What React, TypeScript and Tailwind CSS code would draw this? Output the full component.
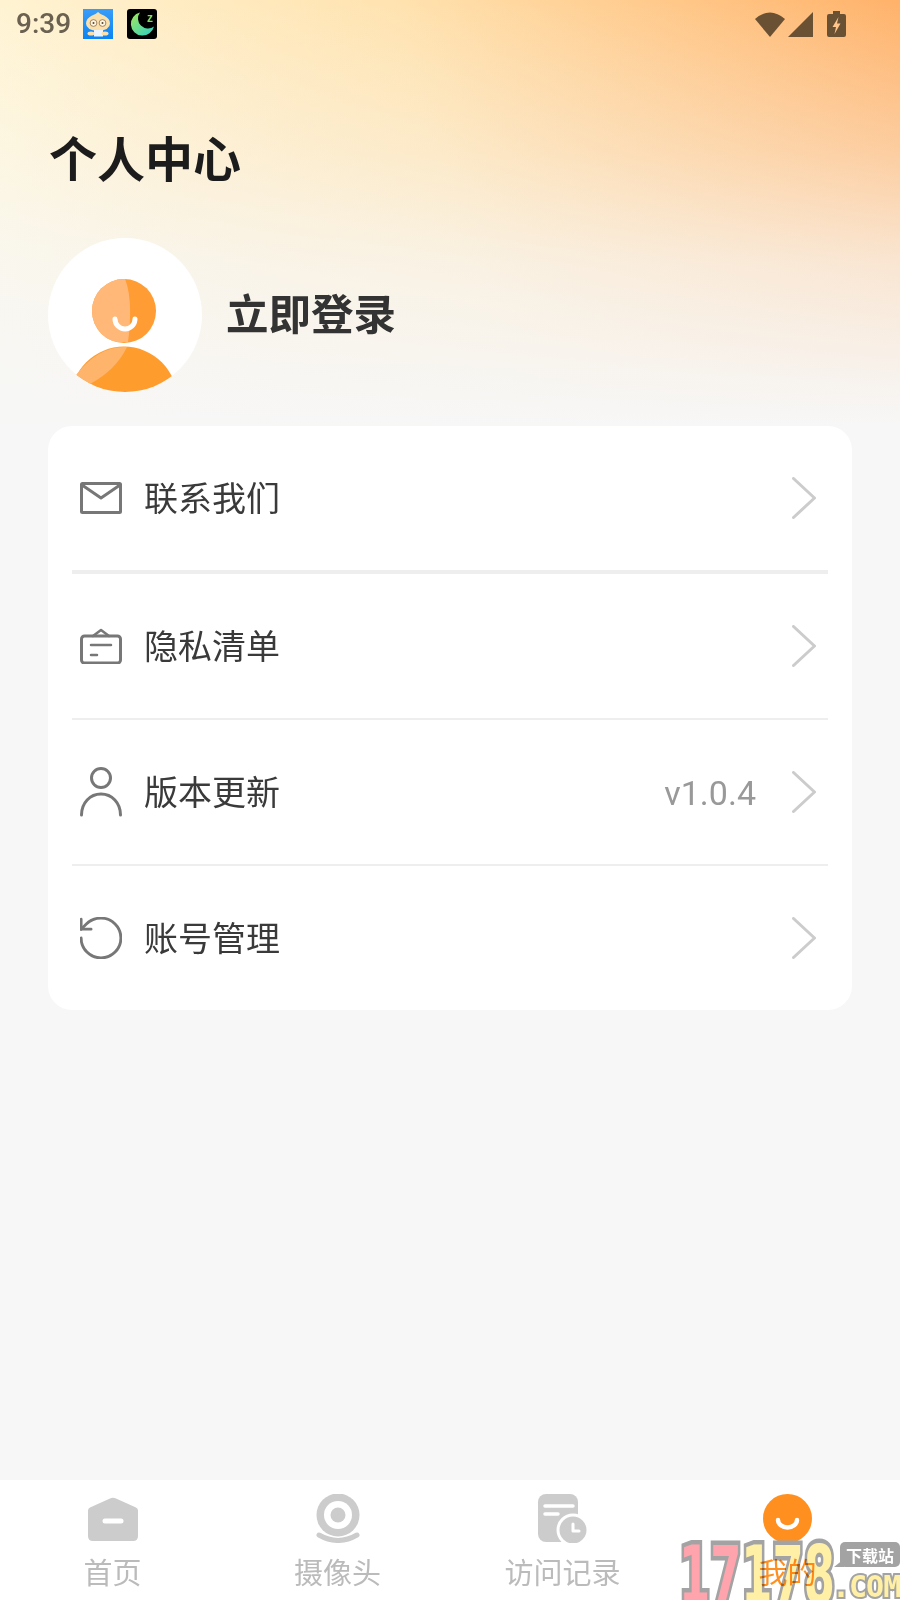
import React from "react";

const rows = [
  { icon: "mail", label: "联系我们" },
  { icon: "list", label: "隐私清单" },
  { icon: "user", label: "版本更新", value: "v1.0.4" },
  { icon: "reset", label: "账号管理" },
];

const tabs = [
  { icon: "home", label: "首页" },
  { icon: "camera", label: "摄像头" },
  { icon: "record", label: "访问记录" },
  { icon: "mine", label: "我的", active: true },
];

function RowIcon({ name }: { name: string }) {
  const common = { fill: "none", stroke: "#777", strokeWidth: 3, strokeLinejoin: "round" as const, strokeLinecap: "round" as const };
  if (name === "mail") {
    return (
      <svg width="42" height="32" viewBox="0 0 42 32" {...common}>
        <rect x="1.5" y="1.5" width="39" height="29" rx="1" />
        <path d="M2 3l19 13L40 3" />
      </svg>
    );
  }
  if (name === "list") {
    return (
      <svg width="42" height="36" viewBox="0 0 42 36" {...common}>
        <path d="M13 8l8-6 8 6" strokeWidth="2.5" />
        <rect x="1.5" y="8" width="39" height="27" rx="3" />
        <path d="M11 17h20M11 27h6" strokeWidth="2.5" />
      </svg>
    );
  }
  if (name === "user") {
    return (
      <svg width="42" height="50" viewBox="0 0 42 50" {...common}>
        <circle cx="21" cy="11" r="9.5" />
        <path d="M1.5 48c0-12 8.5-21 19.5-21s19.500 9 19.500 21" />
      </svg>
    );
  }
  return (
    <svg width="42" height="42" viewBox="2.500 2.500 19 19" fill="none" stroke="#777" strokeWidth="1.300" strokeLinecap="round" strokeLinejoin="round">
      <path d="M3 12a9 9 0 1 0 9-9 9.750 9.750 0 0 0-6.740 2.740L3 8" />
      <path d="M3 3.500V8h4.500" />
    </svg>
  );
}

function TabIcon({ name }: { name: string }) {
  if (name === "home") {
    return (
      <svg width="50" height="44" viewBox="0 0 50 44">
        <path d="M22 1.500q3-1.500 6 0l20 9q2 1 2 3V39q0 5-5 5H5q-5 0-5-5V13.500q0-2 2-3z" fill="#ccc" />
        <path d="M17 24h16" stroke="#fff" strokeWidth="5" strokeLinecap="round" />
      </svg>
    );
  }
  if (name === "camera") {
    return (
      <svg width="44" height="49" viewBox="0 0 44 49">
        <circle cx="22" cy="21" r="21.500" fill="#ccc" />
        <circle cx="22" cy="21" r="14" fill="#fff" />
        <circle cx="22" cy="21" r="7.500" fill="#ccc" />
        <path d="M3 41q19 11 38 0" fill="none" stroke="#ccc" strokeWidth="5" strokeLinecap="round" />
      </svg>
    );
  }
  if (name === "record") {
    return (
      <svg width="50" height="49" viewBox="0 0 50 49">
        <rect x="0" y="0" width="40" height="48" rx="8" fill="#ccc" />
        <path d="M7 12h28M7 20h13" stroke="#fff" strokeWidth="3.500" strokeLinecap="round" />
        <circle cx="35" cy="36" r="15" fill="#ccc" stroke="#fff" strokeWidth="3" />
        <path d="M35 30v7h6" fill="none" stroke="#fff" strokeWidth="3" strokeLinecap="round" strokeLinejoin="round" />
      </svg>
    );
  }
  return (
    <svg width="49" height="49" viewBox="0 0 49 49">
      <circle cx="24.500" cy="24.500" r="24.500" fill="#ff8f1f" />
      <path d="M15 26a9.500 7.500 0 0 0 19 0" fill="none" stroke="#fff" strokeWidth="4.500" strokeLinecap="round" />
    </svg>
  );
}

function Avatar() {
  return (
    <svg width="154" height="154" viewBox="0 0 154 154" className="shrink-0">
      <defs>
        <clipPath id="avatarDisc">
          <circle cx="77" cy="77" r="77" />
        </clipPath>
        <clipPath id="avatarHead">
          <circle cx="76" cy="73" r="32" />
        </clipPath>
      </defs>
      <circle cx="77" cy="77" r="77" fill="#fff" />
      <circle cx="76" cy="73" r="32" fill="#ff9c33" />
      <path d="M30 30H71q16 20 9 74H30z" fill="#ffb878" clipPath="url(#avatarHead)" />
      <g clipPath="url(#avatarDisc)">
        <circle cx="76" cy="162" r="53.400" fill="#ff9c2e" />
        <path d="M28 137Q50 109 76 109q4 0 3 0Q68 132 42 146z" fill="#ffb46c" />
      </g>
      <path d="M67 81a10 10 0 0 0 20 0" fill="none" stroke="#fff" strokeWidth="5" strokeLinecap="round" />
    </svg>
  );
}

function BunIcon() {
  return (
    <svg width="30" height="30" viewBox="0 0 30 30" className="mr-[14px]">
      <defs>
        <linearGradient id="bunBg" x1="0" y1="0" x2="0" y2="1">
          <stop offset="0" stopColor="#3a9cf8" />
          <stop offset="1" stopColor="#0a84f2" />
        </linearGradient>
      </defs>
      <rect width="30" height="30" fill="url(#bunBg)" />
      <path d="M15 3q2 2 6 3.500 6 3 6 8 0 6.500-12 7.500-12-1-12-7.500 0-5 6-8 4-1.500 6-3.500z" fill="#fbe0ac" />
      <circle cx="10.500" cy="14" r="3.400" fill="#fff6e0" stroke="#8a6a45" strokeWidth="0.800" />
      <circle cx="19.500" cy="14" r="3.400" fill="#fff6e0" stroke="#8a6a45" strokeWidth="0.800" />
      <circle cx="10.500" cy="14" r="1" fill="#5a4630" />
      <circle cx="19.500" cy="14" r="1" fill="#5a4630" />
      <rect x="11" y="21" width="9" height="6.500" fill="#eaf4ff" />
      <ellipse cx="8" cy="24.500" rx="3.500" ry="2" fill="#fbe0ac" />
      <ellipse cx="22" cy="24.500" rx="3.500" ry="2" fill="#fbe0ac" />
    </svg>
  );
}

function MoonIcon() {
  return (
    <svg width="30" height="30" viewBox="0 0 30 30">
      <defs>
        <linearGradient id="moonFill" x1="0" y1="0" x2="1" y2="1">
          <stop offset="0" stopColor="#a6e85a" />
          <stop offset="1" stopColor="#28cfc8" />
        </linearGradient>
      </defs>
      <rect width="30" height="30" rx="3" fill="#000" />
      <path d="M13 3.500a11.700 11.700 0 1 0 14 14A10 10 0 0 1 13 3.500z" fill="url(#moonFill)" />
      <text x="23" y="12.500" fontSize="12" fontWeight="700" fontFamily="Liberation Sans" fill="#7fe05c" textAnchor="middle">z</text>
    </svg>
  );
}

export default function App() {
  return (
    <div className="relative flex h-[1600px] w-[900px] flex-col overflow-hidden bg-[#f7f7f7] font-['Roboto','Noto_Sans_CJK_SC',sans-serif]">
      {/* Warm header wash */}
      <header className="h-[426px] shrink-0 bg-[linear-gradient(to_bottom,rgba(247,247,247,0)_0%,rgba(247,247,247,0.35)_35%,rgba(247,247,247,0.72)_62%,#f7f7f7_100%),linear-gradient(75deg,#fff8dc_0%,#ffe3b0_50%,#ffb26a_100%)]">
        <div className="flex h-[48px] items-center pl-[16px] pr-[54px]">
          <span className="mr-[12px] text-[28px] font-medium leading-none text-[#6b6150]">9:39</span>
          <BunIcon />
          <MoonIcon />
          <div className="ml-auto flex items-center">
            <svg width="30" height="26" viewBox="0 0 30 26" className="mr-[3px]">
              <path d="M0 8Q15-5 30 8L15 26z" fill="#6b5133" />
            </svg>
            <svg width="25" height="25" viewBox="0 0 25 25" className="mr-[14px]">
              <path d="M25 0v25H0z" fill="#6b5133" />
            </svg>
            <svg width="19" height="26" viewBox="0 0 19 26">
              <path d="M6 0h7v3h4q2 0 2 2v19q0 2-2 2H2q-2 0-2-2V5q0-2 2-2h4z" fill="#6b5133" />
              <path d="M11.500 6l-6 10h3.500l-1.500 7 6-10.500h-3.500z" fill="#ffc58c" />
            </svg>
          </div>
        </div>
        <h1 className="ml-[49px] mt-[79px] text-[48px] font-bold leading-[68px] text-[#1c1c1c]">个人中心</h1>
        <div className="ml-[48px] mt-[43px] flex items-center">
          <Avatar />
          <span className="ml-[24px] pt-[2px] text-[42.500px] font-bold leading-none text-[#333]">立即登录</span>
        </div>
      </header>

      <section className="mx-[48px] rounded-[24px] bg-white">
        {rows.map((row, i) => (
          <div key={row.label}>
            <div className="flex h-[144px] items-center pl-[32px] pr-[36px]">
              <div className="flex w-[42px] justify-center">
                <RowIcon name={row.icon} />
              </div>
              <span className="ml-[22px] pt-[2px] text-[34px] leading-none text-[#3a3a3a]">{row.label}</span>
              {row.value && <span className="ml-auto pt-[2px] text-[34px] leading-none text-[#999]">{row.value}</span>}
              <svg width="24" height="42" viewBox="0 0 24 42" className={row.value ? "ml-[36px]" : "ml-auto"}>
                <path d="M1.500 1.500L22.500 21L1.500 40.500" fill="none" stroke="#ccc" strokeWidth="3" strokeLinecap="round" strokeLinejoin="round" />
              </svg>
            </div>
            {i < rows.length - 1 && <div className={i === 0 ? "mx-[24px] h-[4px] bg-[#eee]" : "mx-[24px] h-[2px] bg-[#eee]"} />}
          </div>
        ))}
      </section>

      <div className="flex-1" />

      <nav className="flex h-[120px] shrink-0 bg-white">
        {tabs.map((tab) => (
          <div key={tab.label} className="flex w-[225px] flex-col items-center pt-[14px]">
            <div className="flex h-[49px] items-center justify-center">
              <TabIcon name={tab.icon} />
            </div>
            <span className={tab.active ? "relative z-10 mt-[16px] text-[29px] leading-[30px] text-[#ff8f1f] mix-blend-multiply" : "mt-[16px] text-[29px] leading-[30px] text-[#bbb]"}>
              {tab.label}
            </span>
          </div>
        ))}
      </nav>

      {/* Site watermark over the corner */}
      <div className="absolute bottom-0 left-[677px] h-[60px] w-[223px]">
        <div className="absolute left-[2px] top-[6px] flex origin-left scale-x-[0.56] font-['DejaVu_Sans',sans-serif] text-[80px] font-bold leading-[60px] [-webkit-text-stroke:9px_#a3a3a3] [paint-order:stroke_fill]">
          <span className="text-[#ffa3ad]">17</span>
          <span className="text-[#fff0a6]">178</span>
        </div>
        <div className="absolute left-[163px] top-[2px] flex h-[25px] w-[60px] items-center justify-center rounded-[5px] bg-[#a3a3a3] font-['Noto_Sans_CJK_SC',sans-serif] text-[16px] font-bold leading-none text-white">
          下载站
          <svg width="10" height="8" viewBox="0 0 10 8" className="absolute bottom-0 left-[-6px]">
            <path d="M10 0v8H0z" fill="#a3a3a3" />
          </svg>
        </div>
        <div className="absolute left-[155px] top-[34px] font-['DejaVu_Sans_Mono',monospace] text-[30px] font-bold leading-[26px] tracking-[-1px] text-[#fff0a6] [-webkit-text-stroke:4px_#a3a3a3] [paint-order:stroke_fill]">
          .COM
        </div>
      </div>
    </div>
  );
}
